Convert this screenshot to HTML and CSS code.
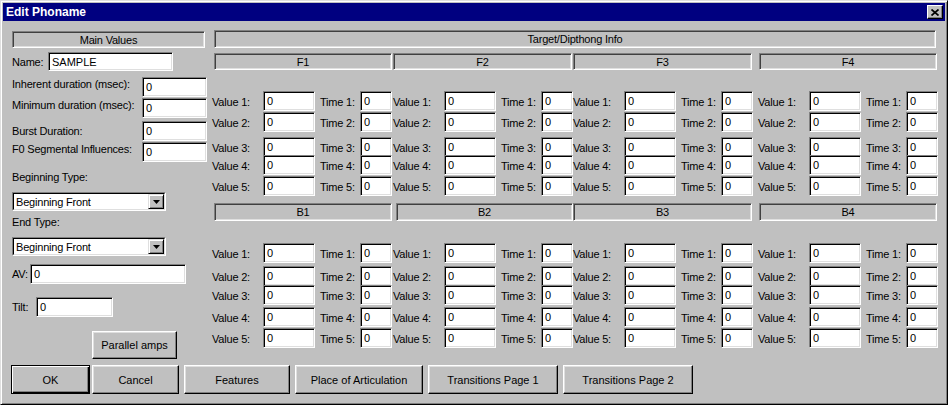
FILE: index.html
```html
<!DOCTYPE html>
<html>
<head>
<meta charset="utf-8">
<title>Edit Phoname</title>
<link rel="stylesheet" href="styles.css">
</head>
<body>
<div class="window">
  <div class="titlebar">
    <span class="title">Edit Phoname</span>
    <div class="close"><svg width="8" height="7" viewBox="0 0 8 7"><path d="M0.5 0.5 L7.5 6.5 M7.5 0.5 L0.5 6.5" stroke="#000" stroke-width="1.7" fill="none"/></svg></div>
  </div>
  <div class="main">
    <div class="left">
      <div class="hdr hdr-main">Main Values</div>
      <div class="row row-name"><span class="lbl">Name:</span><input class="field f-name" value="SAMPLE"></div>
      <div class="row row-dur raise m6"><span class="lbl">Inherent duration (msec):</span><input class="field f-dur" value="0"></div>
      <div class="row row-dur raise m1"><span class="lbl">Minimum duration (msec):</span><input class="field f-dur" value="0"></div>
      <div class="row row-dur m3"><span class="lbl">Burst Duration:</span><input class="field f-dur" value="0"></div>
      <div class="row row-dur raise m1"><span class="lbl">F0 Segmental Influences:</span><input class="field f-dur" value="0"></div>
      <div class="caption m8">Beginning Type:</div>
      <div class="select m8"><div class="select-inner"><span class="select-text">Beginning Front</span><span class="drop"><svg width="7" height="4" viewBox="0 0 7 4"><polygon points="0,0 7,0 3.5,4" fill="#000"/></svg></span></div></div>
      <div class="caption m4">End Type:</div>
      <div class="select m8"><div class="select-inner"><span class="select-text">Beginning Front</span><span class="drop"><svg width="7" height="4" viewBox="0 0 7 4"><polygon points="0,0 7,0 3.5,4" fill="#000"/></svg></span></div></div>
      <div class="row row-av m8"><span class="lbl l-av">AV:</span><input class="field f-av" value="0"></div>
      <div class="row row-tilt"><span class="lbl l-tilt">Tilt:</span><input class="field f-tilt" value="0"></div>
      <button class="btn btn-par">Parallel amps</button>
    </div>
    <div class="right">
      <div class="hdr hdr-target">Target/Dipthong Info</div>
      <div class="hdr-row hdr-row-f">
        <div class="hdr h1">F1</div><div class="hdr h2">F2</div><div class="hdr h3">F3</div><div class="hdr h4">F4</div>
      </div>
      <div class="grid grid-f">
        <div class="col col-f">
          <span class="glbl">Value 1:</span><input class="field" value="0"><span class="glbl t">Time 1:</span><input class="field" value="0">
          <span class="glbl">Value 2:</span><input class="field" value="0"><span class="glbl t">Time 2:</span><input class="field" value="0">
          <span class="glbl">Value 3:</span><input class="field" value="0"><span class="glbl t">Time 3:</span><input class="field" value="0">
          <span class="glbl">Value 4:</span><input class="field" value="0"><span class="glbl t">Time 4:</span><input class="field" value="0">
          <span class="glbl">Value 5:</span><input class="field" value="0"><span class="glbl t">Time 5:</span><input class="field" value="0">
        </div>
        <div class="col col-f">
          <span class="glbl">Value 1:</span><input class="field" value="0"><span class="glbl t">Time 1:</span><input class="field" value="0">
          <span class="glbl">Value 2:</span><input class="field" value="0"><span class="glbl t">Time 2:</span><input class="field" value="0">
          <span class="glbl">Value 3:</span><input class="field" value="0"><span class="glbl t">Time 3:</span><input class="field" value="0">
          <span class="glbl">Value 4:</span><input class="field" value="0"><span class="glbl t">Time 4:</span><input class="field" value="0">
          <span class="glbl">Value 5:</span><input class="field" value="0"><span class="glbl t">Time 5:</span><input class="field" value="0">
        </div>
        <div class="col col-f">
          <span class="glbl">Value 1:</span><input class="field" value="0"><span class="glbl t">Time 1:</span><input class="field" value="0">
          <span class="glbl">Value 2:</span><input class="field" value="0"><span class="glbl t">Time 2:</span><input class="field" value="0">
          <span class="glbl">Value 3:</span><input class="field" value="0"><span class="glbl t">Time 3:</span><input class="field" value="0">
          <span class="glbl">Value 4:</span><input class="field" value="0"><span class="glbl t">Time 4:</span><input class="field" value="0">
          <span class="glbl">Value 5:</span><input class="field" value="0"><span class="glbl t">Time 5:</span><input class="field" value="0">
        </div>
        <div class="col col-f">
          <span class="glbl">Value 1:</span><input class="field" value="0"><span class="glbl t">Time 1:</span><input class="field" value="0">
          <span class="glbl">Value 2:</span><input class="field" value="0"><span class="glbl t">Time 2:</span><input class="field" value="0">
          <span class="glbl">Value 3:</span><input class="field" value="0"><span class="glbl t">Time 3:</span><input class="field" value="0">
          <span class="glbl">Value 4:</span><input class="field" value="0"><span class="glbl t">Time 4:</span><input class="field" value="0">
          <span class="glbl">Value 5:</span><input class="field" value="0"><span class="glbl t">Time 5:</span><input class="field" value="0">
        </div>
      </div>
      <div class="hdr-row hdr-row-b">
        <div class="hdr h1">B1</div><div class="hdr h2">B2</div><div class="hdr h3">B3</div><div class="hdr h4">B4</div>
      </div>
      <div class="grid grid-b">
        <div class="col col-b">
          <span class="glbl">Value 1:</span><input class="field" value="0"><span class="glbl t">Time 1:</span><input class="field" value="0">
          <span class="glbl">Value 2:</span><input class="field" value="0"><span class="glbl t">Time 2:</span><input class="field" value="0">
          <span class="glbl">Value 3:</span><input class="field" value="0"><span class="glbl t">Time 3:</span><input class="field" value="0">
          <span class="glbl">Value 4:</span><input class="field" value="0"><span class="glbl t">Time 4:</span><input class="field" value="0">
          <span class="glbl">Value 5:</span><input class="field" value="0"><span class="glbl t">Time 5:</span><input class="field" value="0">
        </div>
        <div class="col col-b">
          <span class="glbl">Value 1:</span><input class="field" value="0"><span class="glbl t">Time 1:</span><input class="field" value="0">
          <span class="glbl">Value 2:</span><input class="field" value="0"><span class="glbl t">Time 2:</span><input class="field" value="0">
          <span class="glbl">Value 3:</span><input class="field" value="0"><span class="glbl t">Time 3:</span><input class="field" value="0">
          <span class="glbl">Value 4:</span><input class="field" value="0"><span class="glbl t">Time 4:</span><input class="field" value="0">
          <span class="glbl">Value 5:</span><input class="field" value="0"><span class="glbl t">Time 5:</span><input class="field" value="0">
        </div>
        <div class="col col-b">
          <span class="glbl">Value 1:</span><input class="field" value="0"><span class="glbl t">Time 1:</span><input class="field" value="0">
          <span class="glbl">Value 2:</span><input class="field" value="0"><span class="glbl t">Time 2:</span><input class="field" value="0">
          <span class="glbl">Value 3:</span><input class="field" value="0"><span class="glbl t">Time 3:</span><input class="field" value="0">
          <span class="glbl">Value 4:</span><input class="field" value="0"><span class="glbl t">Time 4:</span><input class="field" value="0">
          <span class="glbl">Value 5:</span><input class="field" value="0"><span class="glbl t">Time 5:</span><input class="field" value="0">
        </div>
        <div class="col col-b">
          <span class="glbl">Value 1:</span><input class="field" value="0"><span class="glbl t">Time 1:</span><input class="field" value="0">
          <span class="glbl">Value 2:</span><input class="field" value="0"><span class="glbl t">Time 2:</span><input class="field" value="0">
          <span class="glbl">Value 3:</span><input class="field" value="0"><span class="glbl t">Time 3:</span><input class="field" value="0">
          <span class="glbl">Value 4:</span><input class="field" value="0"><span class="glbl t">Time 4:</span><input class="field" value="0">
          <span class="glbl">Value 5:</span><input class="field" value="0"><span class="glbl t">Time 5:</span><input class="field" value="0">
        </div>
      </div>
    </div>
  </div>
  <div class="buttons">
    <button class="btn default b-ok">OK</button>
    <button class="btn b-cancel">Cancel</button>
    <button class="btn b-feat">Features</button>
    <button class="btn b-place">Place of Articulation</button>
    <button class="btn b-tp">Transitions Page 1</button>
    <button class="btn b-tp">Transitions Page 2</button>
  </div>
</div>
</body>
</html>
```

FILE: styles.css
```css
* { box-sizing: border-box; }
html, body { margin: 0; padding: 0; }
body {
  background: #c0c0c0;
  font-family: "Liberation Sans", Arial, sans-serif;
  font-size: 11px;
  color: #000;
  letter-spacing: -0.2px;
}
.window {
  width: 948px;
  height: 405px;
  border: 1px solid;
  border-color: #dfdfdf #000 #000 #dfdfdf;
  box-shadow: inset 1px 1px #fff, inset -1px -1px #808080;
  padding: 2px;
  background: #c0c0c0;
  overflow: hidden;
}
.titlebar {
  height: 18px;
  background: #000080;
  color: #fff;
  display: flex;
  align-items: center;
  justify-content: space-between;
  padding: 0 2px 0 3px;
}
.title { font-weight: bold; font-size: 12px; letter-spacing: 0; }
.close {
  width: 16px;
  height: 14px;
  background: #c0c0c0;
  border: 1px solid;
  border-color: #fff #000 #000 #fff;
  box-shadow: inset -1px -1px #808080;
  display: flex;
  align-items: center;
  justify-content: center;
}
.close svg { display: block; }

.main { display: flex; align-items: flex-start; }
.left { width: 195px; margin-left: 9px; display: flex; flex-direction: column; }
.right { width: 727px; margin-left: 5px; }

.field {
  background: #fff;
  border: 1px solid;
  border-color: #808080 #fff #fff #808080;
  box-shadow: inset 1px 1px #000, inset -1px -1px #dfdfdf;
  height: 20px;
  padding: 0 3px;
  margin: 0;
  font: inherit;
  color: #000;
  outline: none;
  min-width: 0;
  width: 100%;
  border-radius: 0;
}

.hdr {
  height: 17px;
  border: 1px solid;
  border-color: #808080 #fff #fff #808080;
  box-shadow: inset 1px 1px #404040, inset -1px -1px #dfdfdf;
  display: flex;
  align-items: center;
  justify-content: center;
  white-space: nowrap;
}
.hdr-main { margin-top: 10px; width: 193px; }

.row { display: flex; align-items: center; }
.lbl { white-space: nowrap; }
.row-name { margin-top: 4px; }
.row-name .lbl { width: 36px; flex: none; }
.f-name { width: 125px; height: 19px; }
.row-dur { justify-content: space-between; }
.f-dur { width: 65px; flex: none; }
.raise .lbl { padding-bottom: 7px; }
.m1 { margin-top: 1px; }
.m3 { margin-top: 3px; }
.m4 { margin-top: 4px; }
.m6 { margin-top: 6px; }
.m8 { margin-top: 8px; }
.caption { height: 14px; line-height: 14px; }

.select {
  width: 154px;
  height: 19px;
  border: 1px solid;
  border-color: #808080 #fff #fff #808080;
}
.select-inner {
  height: 100%;
  border: 1px solid;
  border-color: #000 #dfdfdf #dfdfdf #000;
  background: #fff;
  display: flex;
  align-items: center;
}
.select-text { flex: 1; padding-left: 2px; white-space: nowrap; }
.drop {
  width: 16px;
  height: 15px;
  flex: none;
  background: #c0c0c0;
  border: 1px solid;
  border-color: #dfdfdf #000 #000 #dfdfdf;
  box-shadow: inset 1px 1px #fff, inset -1px -1px #808080;
  display: flex;
  align-items: center;
  justify-content: center;
}
.drop svg { display: block; }

.l-av { width: 18px; flex: none; }
.f-av { width: 156px; }
.row-tilt { margin-top: 13px; }
.l-tilt { width: 24px; flex: none; }
.f-tilt { width: 77px; }

.btn {
  background: #c0c0c0;
  border: 1px solid;
  border-color: #fff #000 #000 #fff;
  box-shadow: inset -1px -1px #808080, inset 1px 1px #dfdfdf;
  font: inherit;
  color: #000;
  padding: 0;
  margin: 0;
  border-radius: 0;
  white-space: nowrap;
}
.btn.default {
  border-color: #000;
  box-shadow: inset 1px 1px #fff, inset -1px -1px #000, inset -2px -2px #808080;
}
.btn-par { width: 85px; height: 28px; margin-top: 14px; margin-left: 80px; }

.hdr-target { margin-top: 9px; margin-left: 2px; width: 722px; height: 18px; }
.hdr-row { display: flex; margin-left: 2px; }
.hdr-row-f { margin-top: 5px; }
.hdr-row-b { margin-top: 7px; }
.hdr-row-b .hdr { height: 18px; }
.hdr-row .h1 { width: 178px; }
.hdr-row .h2 { width: 179px; margin-left: 1px; }
.hdr-row .h3 { width: 179px; margin-left: 1px; }
.hdr-row .h4 { width: 178px; margin-left: 7px; }
.hdr-row-b .h2 { width: 177px; margin-left: 4px; }
.hdr-row-b .h3 { margin-left: 0; }

.grid { display: grid; grid-template-columns: 181px 180px 185px 181px; }
.grid-f { margin-top: 21px; }
.grid-b { margin-top: 22px; }
.col { display: grid; grid-template-columns: 51px 52px 45px 32px; }
.col-f { grid-template-rows: 21px 25px 18px 21px 20px; }
.col-b { grid-template-rows: 23px 19px 22px 21px 20px; }
.col .field { height: 20px; align-self: start; }
.glbl { padding-top: 4px; line-height: 14px; white-space: nowrap; align-self: start; }
.glbl.t { padding-left: 5px; }

.buttons { display: flex; margin: 6px 0 0 8px; }
.buttons .btn { height: 29px; }
.b-ok { width: 79px; }
.b-cancel { width: 87px; margin-left: 2px; }
.b-feat { width: 106px; margin-left: 5px; }
.b-place { width: 128px; margin-left: 5px; }
.b-tp { width: 130px; margin-left: 5px; }
```
